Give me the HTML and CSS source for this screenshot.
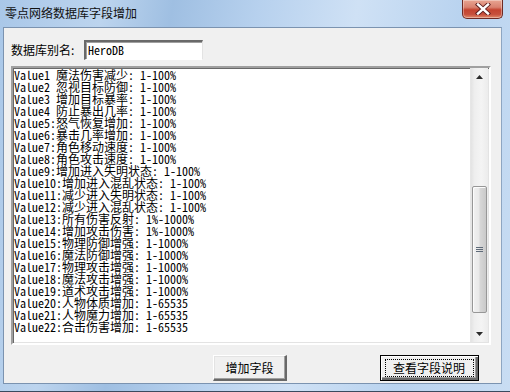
FILE: index.html
```html
<!DOCTYPE html>
<html>
<head>
<meta charset="utf-8">
<link rel="stylesheet" href="styles.css">
</head>
<body>
<div class="window">
  <div class="titlebar">
    <span class="title">零点网络数据库字段增加</span>
    <div class="close">
      <svg width="16" height="12" viewBox="0 0 16 12"><path d="M3 1.5 L13 10.5 M13 1.5 L3 10.5" stroke="#5a1c1c" stroke-width="4.2" stroke-linecap="square"/><path d="M3 1.5 L13 10.5 M13 1.5 L3 10.5" stroke="#ffffff" stroke-width="2.4" stroke-linecap="square"/></svg>
    </div>
  </div>
  <div class="client">
    <div class="name-row">
      <span class="label">数据库别名:</span>
      <div class="textbox">HeroDB</div>
    </div>
    <div class="listbox">
      <div class="items">
        <div>Value1 魔法伤害减少: 1-100%</div>
        <div>Value2 忽视目标防御: 1-100%</div>
        <div>Value3 增加目标暴率: 1-100%</div>
        <div>Value4 防止暴出几率: 1-100%</div>
        <div>Value5:怒气恢复增加: 1-100%</div>
        <div>Value6:暴击几率增加: 1-100%</div>
        <div>Value7:角色移动速度: 1-100%</div>
        <div>Value8:角色攻击速度: 1-100%</div>
        <div>Value9:增加进入失明状态: 1-100%</div>
        <div>Value10:增加进入混乱状态: 1-100%</div>
        <div>Value11:减少进入失明状态: 1-100%</div>
        <div>Value12:减少进入混乱状态: 1-100%</div>
        <div>Value13:所有伤害反射: 1%-1000%</div>
        <div>Value14:增加攻击伤害: 1%-1000%</div>
        <div>Value15:物理防御增强: 1-1000%</div>
        <div>Value16:魔法防御增强: 1-1000%</div>
        <div>Value17:物理攻击增强: 1-1000%</div>
        <div>Value18:魔法攻击增强: 1-1000%</div>
        <div>Value19:道术攻击增强: 1-1000%</div>
        <div>Value20:人物体质增加: 1-65535</div>
        <div>Value21:人物魔力增加: 1-65535</div>
        <div>Value22:合击伤害增加: 1-65535</div>
      </div>
      <div class="scrollbar">
        <div class="sb-btn"><svg width="7" height="4" viewBox="0 0 7 4"><path d="M0 4 L3.5 0 L7 4 Z" fill="#2b2b2b"/></svg></div>
        <div class="sb-track">
          <div class="sb-thumb">
            <svg width="7" height="7" viewBox="0 0 7 7"><path d="M0 1.5 H7 M0 3.5 H7 M0 5.5 H7" stroke="#5e6a78" stroke-width="1"/></svg>
          </div>
        </div>
        <div class="sb-btn"><svg width="7" height="4" viewBox="0 0 7 4"><path d="M0 0 L3.5 4 L7 0 Z" fill="#2b2b2b"/></svg></div>
      </div>
    </div>
    <div class="buttons">
      <div class="btn">增加字段</div>
      <div class="btn default"><span class="focus">查看字段说明</span></div>
    </div>
  </div>
</div>
</body>
</html>
```

FILE: styles.css
```css
html, body {
  margin: 0;
  padding: 0;
}
body {
  width: 510px;
  height: 392px;
  overflow: hidden;
  font-family: "Noto Sans CJK SC", "Noto Sans", sans-serif;
  font-size: 12px;
  color: #000;
}
.window {
  width: 510px;
  height: 392px;
  box-sizing: border-box;
  display: flex;
  flex-direction: column;
  padding: 0 8px 7px 3px;
  border-bottom: 1px solid #3a4a5e;
  background: linear-gradient(100deg, #a9c7e8 0%, #bcd4ee 18%, #9fbfe2 30%, #b7d1ee 45%, #cfe1f5 62%, #b9d3ef 80%, #c9ddf3 100%);
}
.titlebar {
  height: 27px;
  flex: none;
  display: flex;
  align-items: flex-start;
  position: relative;
}
.title {
  margin-left: 2px;
  margin-top: 5px;
  line-height: 16px;
  font-size: 12px;
  color: #111;
}
.close {
  position: absolute;
  left: 459px;
  top: 0;
  width: 41px;
  height: 19px;
  box-sizing: border-box;
  border: 1px solid #6e2a24;
  border-top: none;
  border-radius: 0 0 5px 5px;
  background: linear-gradient(180deg, #e8a592 0%, #d98270 40%, #c4432f 55%, #c7503c 80%, #e08a6a 100%);
  display: flex;
  align-items: center;
  justify-content: center;
  box-shadow: inset 0 0 0 1px rgba(255,255,255,0.35);
}
.client {
  flex: 1;
  background: #f0f0f0;
  border: 1px solid #7b93b0;
  border-right-color: #8ea6c2;
  display: flex;
  flex-direction: column;
  padding: 12px 0 0 7px;
}
.name-row {
  display: flex;
  align-items: center;
  height: 20px;
}
.label {
  width: 73px;
  font-size: 12px;
  line-height: 16px;
}
.textbox {
  width: 119px;
  height: 20px;
  box-sizing: border-box;
  background: #fff;
  border-style: solid;
  border-width: 2px 1px 1px 2px;
  border-color: #696969 #e3e3e3 #ffffff #696969;
  box-shadow: inset 1px 1px 0 #a0a0a0;
  font-family: "Noto Sans Mono CJK SC", "Liberation Mono", monospace;
  font-size: 12px;
  line-height: 16px;
  padding-left: 2px;
}
.listbox {
  margin-top: 6px;
  width: 480px;
  height: 279px;
  box-sizing: border-box;
  border-style: solid;
  border-width: 2px;
  border-color: #a0a0a0 #ffffff #ffffff #a0a0a0;
  box-shadow: inset 1px 1px 0 #696969, inset -1px -1px 0 #e3e3e3;
  background: #fff;
  display: flex;
}
.items {
  flex: 1;
  padding: 1px 0 0 1px;
  font-family: "Noto Sans Mono CJK SC", "Liberation Mono", monospace;
  font-size: 12px;
  line-height: 12px;
  overflow: hidden;
}
.items div {
  height: 12px;
  white-space: pre;
}
.scrollbar {
  width: 17px;
  margin: 0 1px 1px 0;
  display: flex;
  flex-direction: column;
  background: linear-gradient(90deg, #e3e3e3 0%, #eeeeee 20%, #f4f4f4 60%, #ececec 100%);
  border-left: 1px solid #e6e6e6;
}
.sb-btn {
  height: 17px;
  flex: none;
  display: flex;
  align-items: center;
  justify-content: center;
}
.sb-track {
  flex: 1;
  padding-top: 101px;
  box-sizing: border-box;
}
.sb-thumb {
  height: 127px;
  margin: 0 1px;
  box-sizing: border-box;
  border: 1px solid #979797;
  border-radius: 2px;
  background: linear-gradient(90deg, #f1f1f1 0%, #e9e9e9 45%, #d7d7d7 55%, #c9c9c9 100%);
  box-shadow: inset 1px 1px 0 #fcfcfc;
  display: flex;
  align-items: center;
  justify-content: center;
}
.buttons {
  display: flex;
  margin-top: 10px;
  padding-left: 202px;
  gap: 93px;
}
.btn {
  height: 26px;
  width: 74px;
  box-sizing: border-box;
  background: #f0f0f0;
  border-style: solid;
  border-width: 1px 2px 2px 1px;
  border-color: #ffffff #696969 #696969 #ffffff;
  box-shadow: inset -1px -1px 0 #a0a0a0, inset 1px 1px 0 #e3e3e3;
  display: flex;
  align-items: center;
  justify-content: center;
  font-size: 12px;
  line-height: 16px;
}
.btn.default {
  width: 99px;
  border: 1px solid #000;
  box-shadow: inset 1px 1px 0 #ffffff, inset -2px -2px 0 #696969, inset -3px -3px 0 #a0a0a0;
}
.focus {
  box-sizing: border-box;
  width: 89px;
  height: 18px;
  margin-right: 1px;
  margin-bottom: 1px;
  border: 1px dotted #000;
  display: flex;
  align-items: center;
  justify-content: center;
}
```
